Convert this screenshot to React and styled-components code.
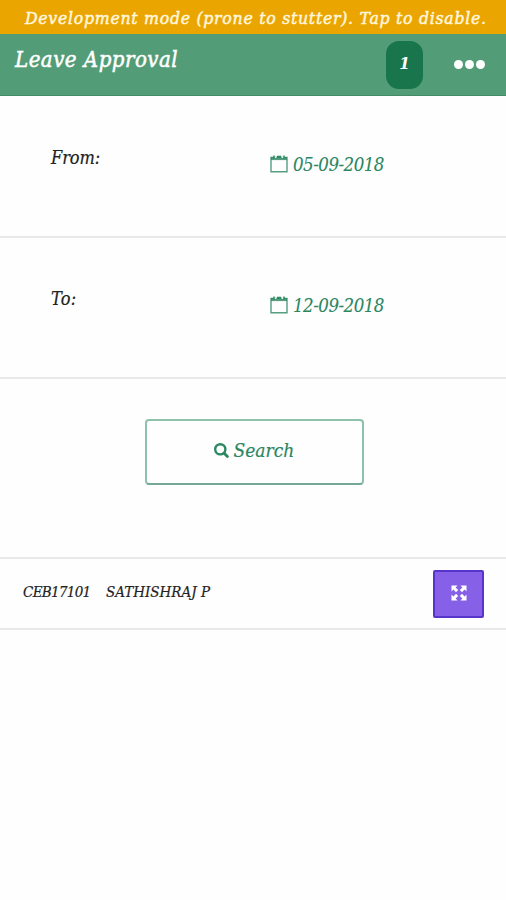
import React from "react";
import styled, { createGlobalStyle } from "styled-components";

const green = "#2b8661";

const GlobalStyle = createGlobalStyle`
	body {
		margin: 0;
		background: #fefefe;
	}
	*, *::before, *::after {
		box-sizing: border-box;
	}
`;
const Page = styled.div`
	min-height: 900px;
	font-family: "DejaVu Serif Condensed", "DejaVu Serif", serif;
	font-stretch: condensed;
	font-style: italic;
	color: #222;
`;
const DevBanner = styled.div`
	height: 34px;
	padding: 6px 0 0 25px;
	background: #eba501;
	color: #fff6dc;
	white-space: nowrap;
`;
const Header = styled.header`
	display: flex;
	height: 62px;
	padding: 0 21px 0 15px;
	background: #529d78;
	border-bottom: 1px solid #438a68;
	color: #fff;
`;
const Title = styled.div`
	flex: 1;
	padding-top: 14px;
`;
const Badge = styled.div`
	display: flex;
	justify-content: center;
	width: 37px;
	height: 48px;
	margin: 7px 31px 0 0;
	padding-top: 10px;
	border-radius: 13px;
	background: #19754c;
`;
const MenuButton = styled.div`
	display: flex;
	gap: 2px;
	padding-top: 26px;
`;
const Dot = styled.span`
	width: 9px;
	height: 9px;
	border-radius: 50%;
	background: #fff;
`;
const DateRow = styled.div`
	display: flex;
	height: ${props => props.$height}px;
	padding: ${props => props.$top}px 0 0 51px;
	border-bottom: 2px solid #e9e9e9;
`;
const Label = styled.div`
	width: 219px;
	height: 32px;
`;
const DateValue = styled.div`
	display: flex;
	align-items: flex-start;
	gap: 5px;
	height: 32px;
	padding-top: 7px;
	color: ${green};

	svg {
		margin-top: 2px;
	}
`;
const SearchArea = styled.div`
	display: flex;
	justify-content: center;
	height: 180px;
	padding: 40px 0 0 2px;
	border-bottom: 2px solid #e9e9e9;
`;
const SearchButton = styled.div`
	display: flex;
	gap: 5px;
	width: 219px;
	height: 66px;
	padding: 17px 0 0 67px;
	border: 2px solid #8fc0ac;
	border-bottom-color: #76a795;
	border-radius: 4px;
	color: ${green};

	svg {
		margin-top: 5px;
	}
`;
const ResultRow = styled.div`
	display: flex;
	height: 71px;
	padding: 11px 22px 0 23px;
	border-bottom: 2px solid #e9e9e9;
`;
const Code = styled.div`
	width: 83px;
	padding-top: 10px;
`;
const Name = styled.div`
	flex: 1;
	padding-top: 10px;
`;
const ExpandButton = styled.div`
	display: flex;
	align-items: center;
	justify-content: center;
	width: 51px;
	height: 48px;
	padding-bottom: 2px;
	border: 2px solid #5735ca;
	border-radius: 2px;
	background: #8660e6;
`;
const Text = styled.span`
	display: block;
	font-size: ${props => props.$size}px;
	font-weight: ${props => (props.$bold ? "bold" : "normal")};
	letter-spacing: ${props => props.$spacing || 0}px;
	line-height: 24px;
	white-space: nowrap;
	-webkit-text-stroke: ${props => props.$stroke || 0}px currentColor;
`;

const CalendarIcon = () => (
	<svg width="18" height="18" viewBox="0 0 18 18" fill="none" stroke={green}>
		<path d="M1 2.5h16v14.2H1z" strokeWidth="1.4" opacity="0.8" />
		<path d="M1 3.6h16" strokeWidth="3" opacity="0.8" />
		<path d="M4 .5v3M14 .5v3M7 1.4h4" strokeWidth="1.4" />
		<path d="M4.8 2.4h1.6M11.6 2.4h1.6" stroke="#fff" strokeWidth="1" />
	</svg>
);

const SearchIcon = () => (
	<svg width="15" height="15" viewBox="0 0 15 15" fill="none" stroke={green}>
		<circle cx="6.3" cy="6.3" r="5.1" strokeWidth="2.4" />
		<path d="M10 10l3.4 3.4" strokeWidth="2.8" strokeLinecap="round" />
	</svg>
);

const ExpandIcon = () => (
	<svg width="16" height="16" viewBox="0 0 16 16" fill="#fff">
		<path d="M.5.5h6L4.6 2.4 7.2 5 5 7.2 2.4 4.6.5 6.5z" />
		<path d="M15.5.5v6l-1.9-1.9L11 7.2 8.8 5l2.6-2.6L9.5.5z" />
		<path d="M.5 15.5v-6l1.9 1.9L5 8.8 7.2 11l-2.6 2.6 1.9 1.9z" />
		<path d="M15.5 15.5h-6l1.9-1.9L8.8 11 11 8.8l2.6 2.6 1.9-1.9z" />
	</svg>
);

const DateField = ({ label, value, height, top, spacing }) => (
	<DateRow $height={height} $top={top}>
		<Label>
			<Text $size={18} $spacing={spacing} $stroke={0.2}>
				{label}
			</Text>
		</Label>
		<DateValue>
			<CalendarIcon />
			<Text $size={18.5} $spacing={-0.5} $stroke={0.1}>
				{value}
			</Text>
		</DateValue>
	</DateRow>
);

export default () => {
	return (
		<Page>
			<GlobalStyle />
			<DevBanner>
				<Text $size={17.5} $spacing={0.72} $stroke={0.5}>
					Development mode (prone to stutter). Tap to disable.
				</Text>
			</DevBanner>
			<Header>
				<Title>
					<Text $size={22} $spacing={0.5} $stroke={0.5}>
						Leave Approval
					</Text>
				</Title>
				<Badge>
					<Text $size={17} $bold>
						1
					</Text>
				</Badge>
				<MenuButton>
					<Dot />
					<Dot />
					<Dot />
				</MenuButton>
			</Header>
			<DateField
				label="From:"
				value="05-09-2018"
				height={142}
				top={50}
				spacing={-0.1}
			/>
			<DateField
				label="To:"
				value="12-09-2018"
				height={141}
				top={49}
				spacing={0.3}
			/>
			<SearchArea>
				<SearchButton>
					<SearchIcon />
					<Text $size={19} $stroke={0.2}>
						Search
					</Text>
				</SearchButton>
			</SearchArea>
			<ResultRow>
				<Code>
					<Text $size={15} $spacing={-0.7} $stroke={0.2}>
						CEB17101
					</Text>
				</Code>
				<Name>
					<Text $size={15} $spacing={0} $stroke={0.2}>
						SATHISHRAJ P
					</Text>
				</Name>
				<ExpandButton>
					<ExpandIcon />
				</ExpandButton>
			</ResultRow>
		</Page>
	);
};
